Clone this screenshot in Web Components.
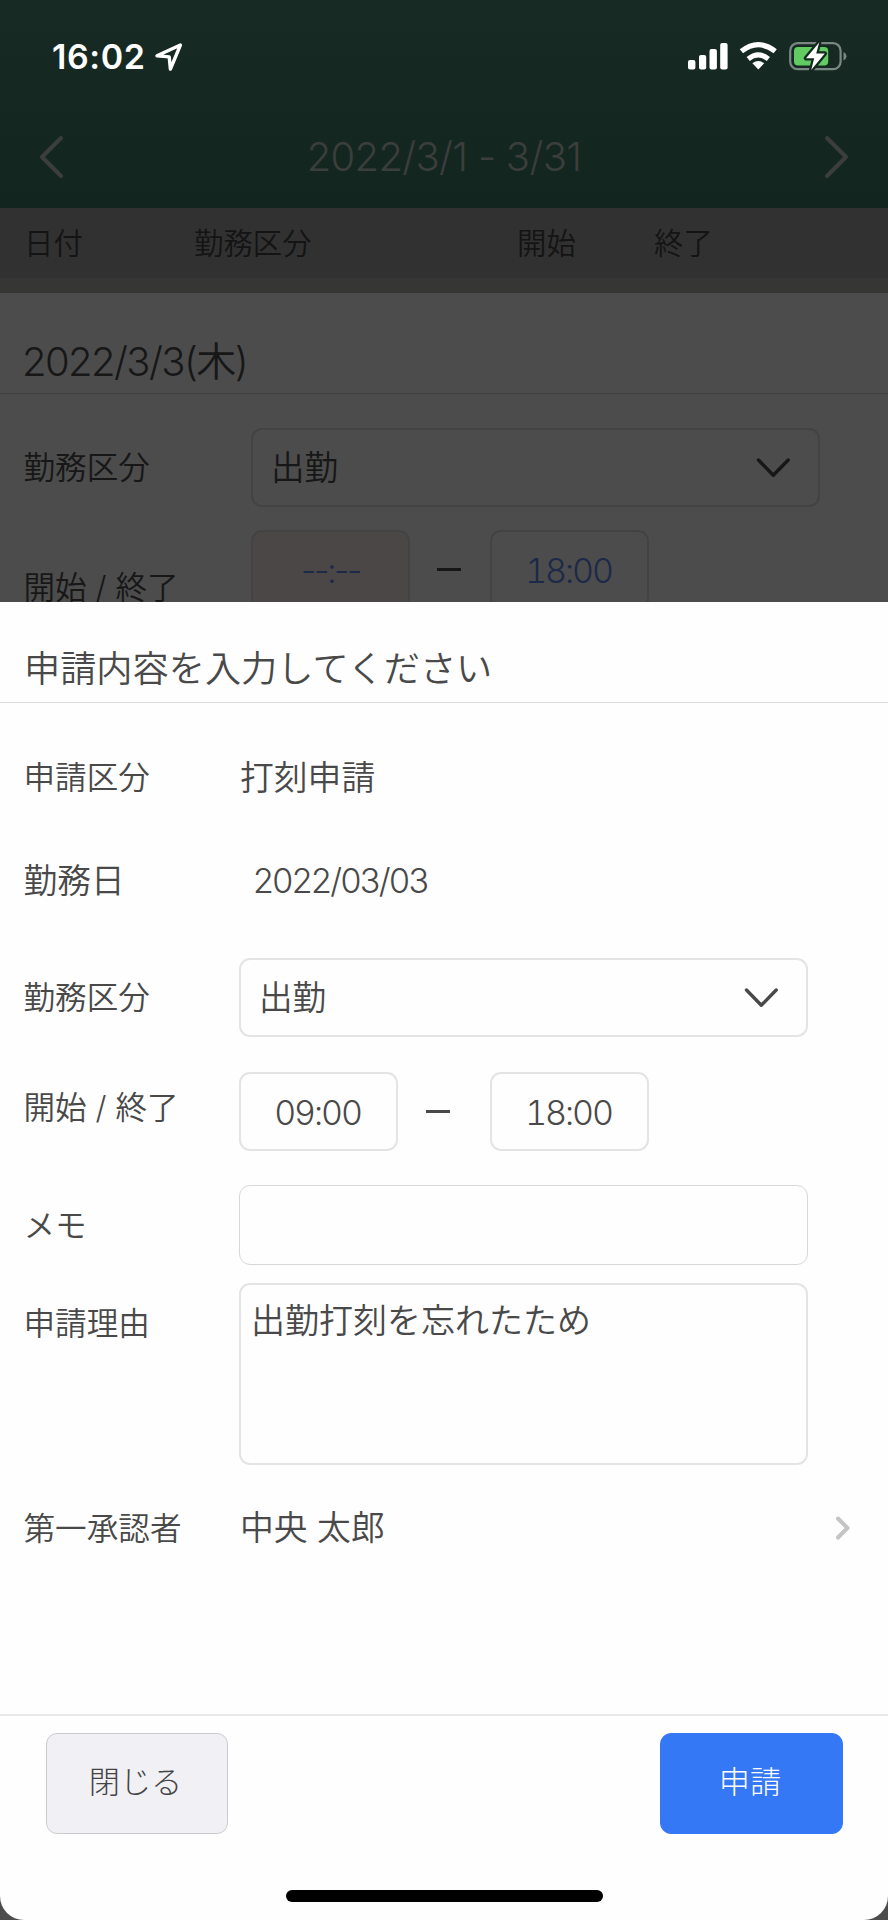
<!DOCTYPE html>
<html lang="ja">
<head>
<meta charset="utf-8">
<title>勤怠申請</title>
<style>
html,body{margin:0;padding:0}
body{width:888px;height:1920px;overflow:hidden;background:#4c4c4c;font-family:Inter,"Noto Sans CJK JP",sans-serif;font-weight:350;line-height:1}
</style>
</head>
<body>
<attendance-app></attendance-app>
<script>
const define=(name,css,html)=>customElements.define(name,class extends HTMLElement{
  constructor(){super();this.attachShadow({mode:'open'}).innerHTML=`<style>*{box-sizing:border-box}${css}</style>${html}`;}
});

define('status-bar',`
:host{display:flex;height:108px;justify-content:space-between;align-items:flex-start;color:#fff;padding:39px 40px 0 52px;box-sizing:border-box}
.time{font-size:34px;font-weight:600;line-height:36px;letter-spacing:.6px}
.left{display:flex}.left svg{margin-left:7px}
svg{display:block}`,
`<div class="left"><span class="time">16:02</span>
<svg width="32" height="36" viewBox="153 39 32 36" fill="none" stroke="#fff" stroke-width="3.4" stroke-linejoin="round"><path d="M180.4 45 157 55.8l12.2 1.1 1.2 12.2Z"/></svg></div>
<svg width="162" height="36" viewBox="686 39 162 36">
<g fill="#fff"><rect x="688" y="60" width="7.4" height="9.4" rx="2"/><rect x="699" y="55" width="7.2" height="14.4" rx="2"/><rect x="709.5" y="49" width="7.4" height="20.4" rx="2"/><rect x="720.2" y="43" width="7.4" height="26.4" rx="2"/></g>
<g fill="none" stroke="#fff" stroke-width="5.2"><path d="M741.4 51.3Q758.3 38 775.2 51.3"/><path d="M748.2 59Q758.3 50.8 768.4 59" stroke-width="5"/></g>
<path d="M752.4 63.3q5.9-4.6 11.8 0l-5.9 6.1z" fill="#fff"/>
<rect x="790.2" y="43.2" width="50.4" height="26" rx="7.5" fill="none" stroke="#7b8782" stroke-width="2.2"/>
<path d="M843.5 52q3 1.4 3 4.2t-3 4.2z" fill="#7b8782"/>
<rect x="794" y="47" width="34.2" height="18.4" rx="4" fill="#62cb62"/>
<path d="M819.2 42.4 806 58.2h8.2l-3 11.8 13.6-16.4h-8.6z" fill="#fff" stroke="#15291f" stroke-width="4.5" stroke-linejoin="round" paint-order="stroke"/>
</svg>`);

define('month-nav',`
:host{display:flex;height:100px;align-items:center;justify-content:space-between;padding:0 37px 3px;box-sizing:border-box;color:#3b3e3c;font-size:40px;font-weight:280}
svg{display:block}.t{letter-spacing:-.7px}`,
`<svg width="28" height="46" viewBox="0 0 28 46" fill="none" stroke="#3b3e3c" stroke-width="4" stroke-linecap="round" stroke-linejoin="round"><path d="M24 4 5 23l19 19"/></svg>
<span class="t"><slot></slot></span>
<svg width="28" height="46" viewBox="0 0 28 46" fill="none" stroke="#3b3e3c" stroke-width="4" stroke-linecap="round" stroke-linejoin="round"><path d="M4 4l19 19L4 42"/></svg>`);

define('table-head',`
:host{display:grid;grid-template-columns:170px 323px 137px 1fr;height:85px;box-sizing:border-box;padding-left:24px;background:#313131;border-bottom:15px solid #363635;color:#141414;font-size:29.4px;line-height:71px}`,
`<span>日付</span><span>勤務区分</span><span>開始</span><span>終了</span>`);

define('section-title',`
:host{display:flex;align-items:flex-end;box-sizing:border-box;padding-left:24px;border-bottom:1px solid var(--line,#d9d9d9)}`,
`<slot></slot>`);

define('form-row',`
:host{display:grid;grid-template-columns:var(--label,239px) 1fr;align-items:center}
.l{padding:1px 0 0 23.5px;font-size:31.6px;line-height:40px;white-space:nowrap}
.v{display:flex;align-items:center;font-size:33.8px}`,
`<div class="l"><slot name="label"></slot></div><div class="v"><slot></slot></div>`);

define('select-box',`
:host{display:flex;align-items:center;justify-content:space-between;width:569px;height:79px;box-sizing:border-box;border:2px solid var(--edge,#e4e4e6);border-radius:11px;padding:0 26px 0 18px;font-size:33.6px}
span{padding-top:1px}
svg{display:block}`,
`<span><slot></slot></span><svg width="37" height="22" viewBox="0 0 37 22" fill="none" stroke="currentColor" stroke-width="3.4" stroke-linecap="round" stroke-linejoin="round"><path d="M3.5 3 18.3 18.3 33.2 3"/></svg>`);

define('time-box',`
:host{display:flex;align-items:center;justify-content:center;width:159px;height:79px;box-sizing:border-box;border:2px solid var(--edge,#e4e4e6);border-radius:11px;font-size:34px;font-weight:300;padding:2px 2px 0 0;letter-spacing:-2.1px;font-variant-numeric:tabular-nums}
:host([empty]){font-variant-numeric:normal;letter-spacing:-2.4px;padding-right:0}`,
`<span><slot></slot></span>`);

define('range-dash',`:host{display:block;width:24px;height:2.6px;background:currentColor}`,``);

define('text-area',`
:host{display:block;width:569px;height:80px;box-sizing:border-box;border:1px solid #d8d8da;border-radius:11px;font-size:34px}
:host([multi]){height:182px;border:2px solid #e4e4e6;padding:16px 0 0 10px;line-height:40px}`,
`<slot></slot>`);

define('push-button',`
:host{display:flex;align-items:center;justify-content:center;width:182px;height:101px;box-sizing:border-box;border-radius:11px;border:1px solid #cbcbcd;background:#f1f0f5;color:#444;font-size:31.2px;font-weight:300;padding:0 3px 1px 0}
:host([primary]){border-color:#3478f6;background:#3478f6;color:#fff;width:183px}`,
`<span><slot></slot></span>`);

define('home-indicator',`:host{display:block;width:317px;height:11.5px;border-radius:6px;background:#000}`,``);

define('attendance-page',`
:host{display:block;height:602px;overflow:hidden;color:#171717;background:#4c4c4c;--edge:#434344;--line:#404040;--label:251px}
header{background:linear-gradient(#172b24,#12261f)}
section-title{height:101px;font-size:40px;padding-bottom:11px;padding-left:22px}
.d{letter-spacing:-1.6px;font-weight:300}
.d b{font-weight:350}
.r1{margin-top:34px}.r2{margin-top:23px;height:79px}
.r2 [slot]{display:block;padding-top:36px}
.blue{color:#1c2948}.pink{background:#4c4747}
range-dash{margin:0 29px 0 27px}`,
`<header><status-bar></status-bar><month-nav>2022/3/1 - 3/31</month-nav></header>
<table-head></table-head>
<section-title><span class="d">2022/3/3(<b>木</b>)</span></section-title>
<form-row class="r1"><span slot="label">勤務区分</span><select-box>出勤</select-box></form-row>
<form-row class="r2"><span slot="label">開始 / 終了</span><time-box class="blue pink" empty>--:--</time-box><range-dash></range-dash><time-box class="blue">18:00</time-box></form-row>`);

define('request-sheet',`
:host{display:flex;flex-direction:column;height:1318px;background:#fefefe;color:#494949;border-radius:0 0 24px 24px;overflow:hidden}
section-title{height:101px;font-size:36.2px;padding-bottom:15px}
.date{padding-left:14px;font-size:34px;font-weight:300;letter-spacing:-1.6px;padding-top:2px}
.val{padding-left:1px}
range-dash{margin:0 40px 0 28px}
.big{display:block;font-size:33.7px}
.chev{margin-left:auto;margin-right:37px}
footer{margin-top:123px;border-top:2px solid #e9e9e9;padding:17px 45px 0 46px;display:flex;justify-content:space-between}
home-indicator{margin:56px 0 0 286px}`,
`<section-title>申請内容を入力してください</section-title>
<form-row style="height:149px"><span slot="label">申請区分</span><span class="val">打刻申請</span></form-row>
<form-row style="height:56px"><span slot="label" class="big">勤務日</span><span class="date">2022/03/03</span></form-row>
<form-row style="margin-top:50px"><span slot="label">勤務区分</span><select-box>出勤</select-box></form-row>
<form-row style="margin-top:35px"><span slot="label" style="display:block;padding-bottom:8px">開始 / 終了</span><time-box>09:00</time-box><range-dash></range-dash><time-box>18:00</time-box></form-row>
<form-row style="margin-top:34px"><span slot="label">メモ</span><text-area></text-area></form-row>
<form-row style="margin-top:18px;align-items:start"><span slot="label" style="display:block;padding-top:20px">申請理由</span><text-area multi>出勤打刻を忘れたため</text-area></form-row>
<form-row style="height:126px"><span slot="label">第一承認者</span><span class="val">中央 太郎</span><svg class="chev" width="16" height="26" viewBox="0 0 16 26" fill="none" stroke="#c4c4c4" stroke-width="4" stroke-linecap="round" stroke-linejoin="round"><path d="M3 3.5 12.5 13 3 22.5"/></svg></form-row>
<footer><push-button>閉じる</push-button><push-button primary>申請</push-button></footer>
<home-indicator></home-indicator>`);

define('attendance-app',`:host{display:block;width:888px;height:1920px;background:#4c4c4c}`,
`<attendance-page></attendance-page><request-sheet></request-sheet>`);
</script>
</body>
</html>
